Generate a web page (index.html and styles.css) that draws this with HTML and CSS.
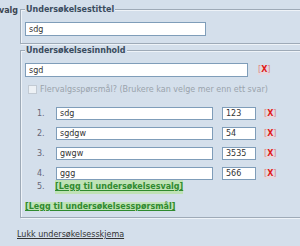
FILE: index.html
```html
<!DOCTYPE html>
<html lang="no">
<head>
    <meta charset="UTF-8">
    <title>Undersøkelse</title>
    <link rel="stylesheet" href="styles.css">
</head>
<body>
    <div class="page">
        <div class="side"><span class="side-label">Undersøkelsesvalg</span></div>
        <div class="main">
            <fieldset class="box box-title">
                <legend>Undersøkelsestittel</legend>
                <input class="field field-title" type="text" value="sdg">
            </fieldset>
            <fieldset class="box box-content">
                <legend>Undersøkelsesinnhold</legend>
                <div class="question">
                    <input class="field field-question" type="text" value="sgd">
                    <span class="del">[<b>X</b>]</span>
                </div>
                <label class="multi"><input class="check" type="checkbox" disabled>Flervalgsspørsmål? (Brukere kan velge mer enn ett svar)</label>
                <ol class="options">
                    <li class="option">
                        <span class="num">1.</span>
                        <input class="field field-option" type="text" value="sdg">
                        <input class="field field-score" type="text" value="123">
                        <span class="del">[<b>X</b>]</span>
                    </li>
                    <li class="option">
                        <span class="num">2.</span>
                        <input class="field field-option" type="text" value="sgdgw">
                        <input class="field field-score" type="text" value="54">
                        <span class="del">[<b>X</b>]</span>
                    </li>
                    <li class="option">
                        <span class="num">3.</span>
                        <input class="field field-option" type="text" value="gwgw">
                        <input class="field field-score" type="text" value="3535">
                        <span class="del">[<b>X</b>]</span>
                    </li>
                    <li class="option">
                        <span class="num">4.</span>
                        <input class="field field-option" type="text" value="ggg">
                        <input class="field field-score" type="text" value="566">
                        <span class="del">[<b>X</b>]</span>
                    </li>
                    <li class="option option-add">
                        <span class="num">5.</span>
                        <a class="add" href="#">[Legg til undersøkelsesvalg]</a>
                    </li>
                </ol>
                <div class="add-question"><a class="add" href="#">[Legg til undersøkelsesspørsmål]</a></div>
            </fieldset>
        </div>
    </div>
    <a class="close" href="#">Lukk undersøkelsesskjema</a>
</body>
</html>
```

FILE: styles.css
```css
body {
    margin: 0;
    font-family: "DejaVu Sans", Verdana, sans-serif;
    font-size: 8px;
    background-color: #d4dfeb;
    color: #333;
    width: 300px;
    height: 246px;
    overflow: hidden;
}
.page {
    display: flex;
    width: 340px;
}
.side {
    width: 18px;
    flex: none;
    display: flex;
    justify-content: flex-end;
    overflow: hidden;
    padding-top: 5px;
    margin-right: 2px;
}
.side-label {
    white-space: nowrap;
    font-weight: bold;
    line-height: 11px;
    color: #3b4652;
}
.main {
    flex: 1;
    padding-top: 4px;
}
/* grey line with a light edge under it, like the old groove look */
.box {
    margin: 0;
    padding: 7px 4px 7px 4px;
    border: 1px solid #9eaab7;
    box-shadow: inset 1px 1px 0 #eef3f8, 1px 1px 0 #eef3f8;
}
.box-content {
    margin-top: 1px;
    padding-bottom: 3px;
}
legend {
    padding: 0 1px;
    font-weight: bold;
    line-height: 11px;
    color: #3a4c5e;
    background-color: #d4dfeb;
}
.field {
    box-sizing: border-box;
    height: 14px;
    margin: 0;
    padding: 0 3px;
    border: 1px solid #7f9db9;
    background: #fff;
    font-family: inherit;
    font-size: 8px;
    color: #333;
}
.field-title {
    display: block;
    width: 181px;
}
.question {
    display: flex;
    align-items: center;
}
.field-question {
    width: 223px;
}
.del {
    margin-left: 10px;
    color: #d08a8a;
    background: #e4d8e0;
    line-height: 10px;
    font-size: 8px;
}
.del b {
    color: #e01818;
}
.multi {
    display: flex;
    align-items: center;
    margin-top: 7px;
    line-height: 11px;
    color: #9aa3ac;
}
.check {
    appearance: none;
    width: 9px;
    height: 9px;
    margin: 0 3px 0 3px;
    border: 1px solid #c2cad3;
    background: #edf1f5;
}
.options {
    list-style: none;
    margin: 12px 0 0 0;
    padding: 0 0 0 12px;
}
.option {
    display: flex;
    align-items: center;
}
.option + .option {
    margin-top: 7px;
}
.option .field {
    height: 13px;
}
.option .del {
    margin-left: 8px;
}
.num {
    width: 19px;
    color: #667;
}
.field-option {
    width: 157px;
}
.field-score {
    width: 34px;
    margin-left: 9px;
}
.option-add {
    line-height: 14px;
}
.option + .option-add {
    margin-top: 0;
}
.option-add .num {
    width: 18px;
}
.add {
    font-weight: bold;
    color: #2f8a2f;
    background: #bfe2b6;
    text-decoration: underline;
}
.add-question {
    margin-top: 6px;
    line-height: 14px;
}
.close {
    display: block;
    margin: 10px 0 0 17px;
    line-height: 14px;
    color: #333;
    text-decoration: underline;
}
```
